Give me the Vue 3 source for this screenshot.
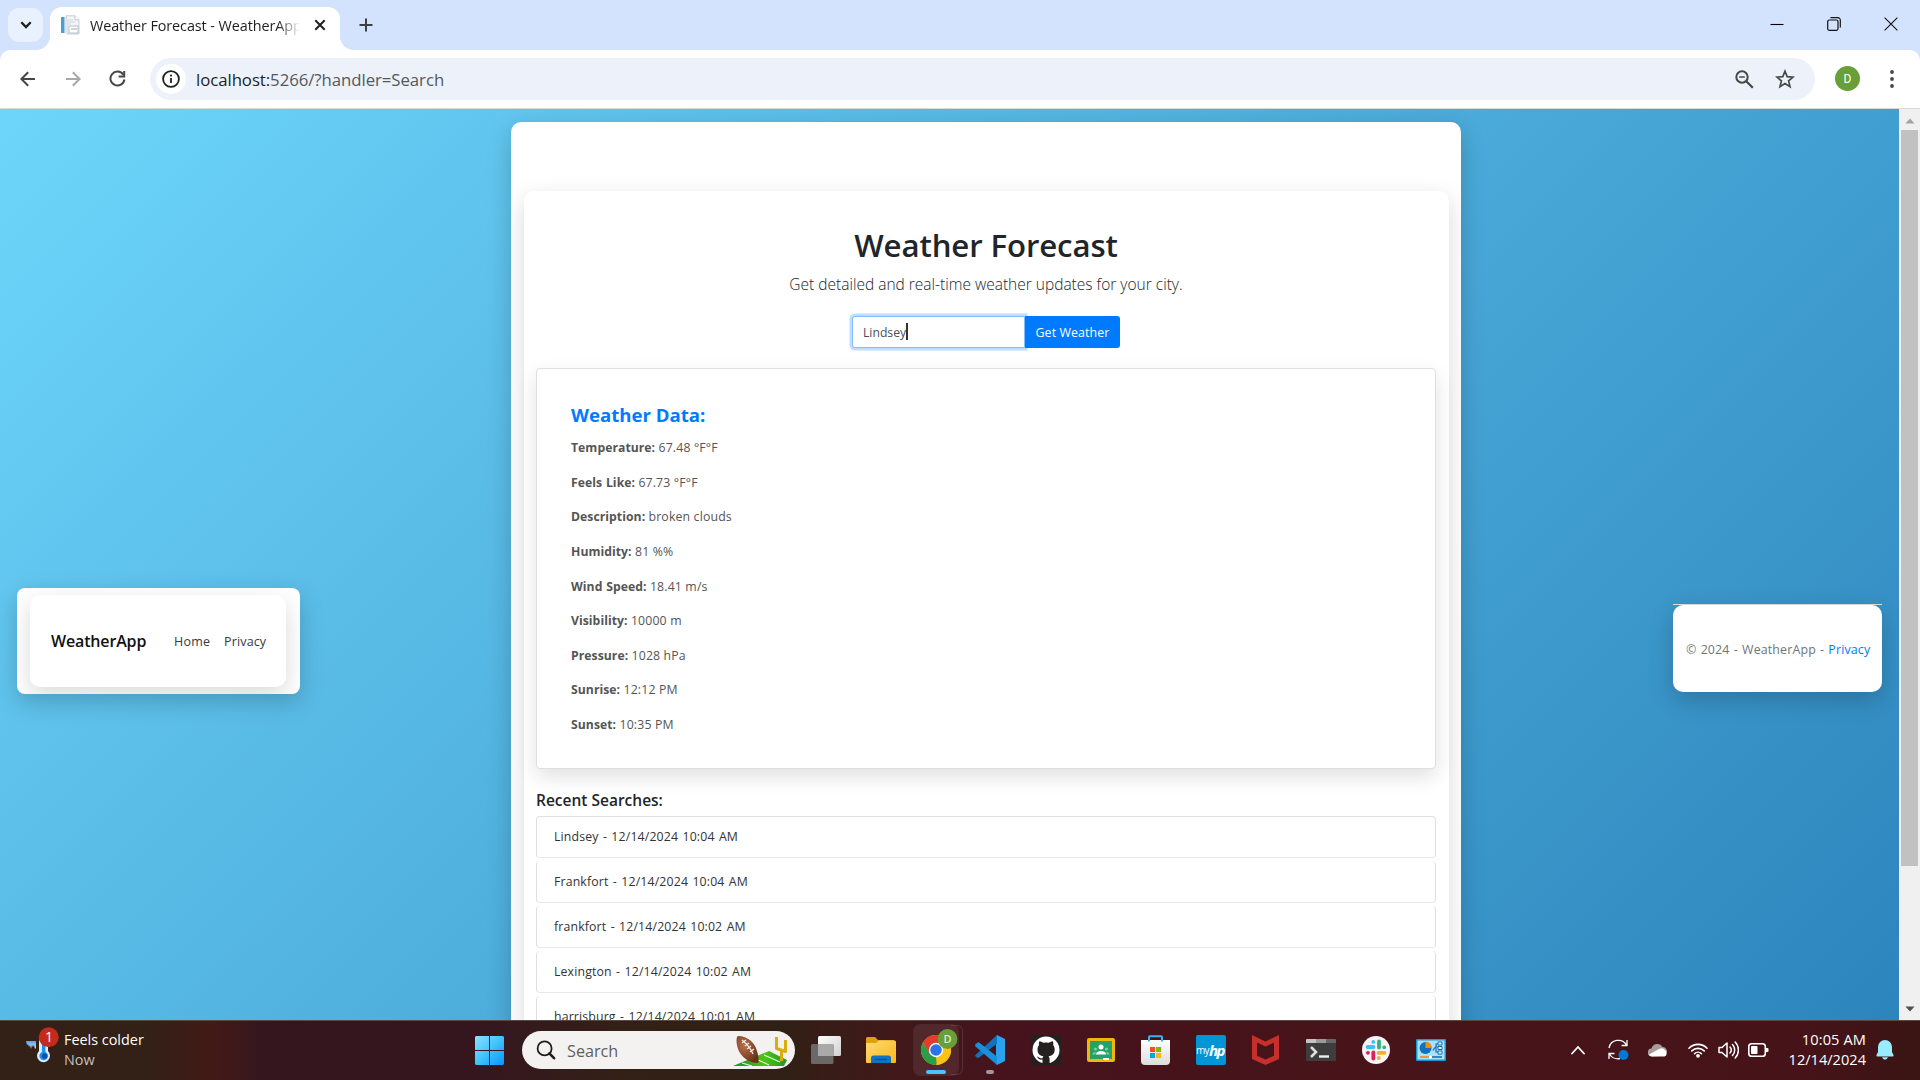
<script setup>
const readings = [
  ['Temperature:', '67.48 °F°F'],
  ['Feels Like:', '67.73 °F°F'],
  ['Description:', 'broken clouds'],
  ['Humidity:', '81 %%'],
  ['Wind Speed:', '18.41 m/s'],
  ['Visibility:', '10000 m'],
  ['Pressure:', '1028 hPa'],
  ['Sunrise:', '12:12 PM'],
  ['Sunset:', '10:35 PM'],
]
const searches = [
  'Lindsey - 12/14/2024 10:04 AM',
  'Frankfort - 12/14/2024 10:04 AM',
  'frankfort - 12/14/2024 10:02 AM',
  'Lexington - 12/14/2024 10:02 AM',
  'harrisburg - 12/14/2024 10:01 AM',
]
</script>

<template>
  <div class="screen">
    <div class="tabstrip">
      <div class="tab-search">
        <svg width="12" height="8" viewBox="0 0 12 8"><path d="M1.3 1.3 6 6l4.7-4.7" fill="none" stroke="#1f1f1f" stroke-width="2.3" /></svg>
      </div>
      <div class="tab">
        <svg class="flare left" width="14" height="14" viewBox="0 0 14 14"><path d="M14 0v14H0A14 14 0 0 0 14 0z" fill="#fff" /></svg>
        <svg class="favicon" width="20" height="20" viewBox="0 0 20 20">
          <path d="M1 2h4v16H1z" fill="#4a9fd0" /><path d="M4 2h1.5v16H4z" fill="#a5cfe8" />
          <path d="M6 .8h9l4 4V19H7V5z" fill="#f3f5f7" stroke="#c9ced4" />
          <path d="M15 .8v4h4" fill="#fff" stroke="#c2c7ce" />
          <path d="M8 5h5M8 7h7M8 9h3" stroke="#d2d6da" />
          <path d="M9 11h9v7H9z" fill="#fff" stroke="#b9bfc6" /><path d="M11 14h6" stroke="#9ea5ad" />
        </svg>
        <span class="tab-title">Weather Forecast - WeatherApp</span>
        <svg class="tab-close" width="12" height="12" viewBox="0 0 12 12"><path d="M1.3 1.3l9.4 9.4M10.7 1.3l-9.4 9.4" stroke="#1f1f1f" stroke-width="2" /></svg>
        <svg class="flare right" width="14" height="14" viewBox="0 0 14 14"><path d="M0 0v14h14A14 14 0 0 1 0 0z" fill="#fff" /></svg>
      </div>
      <svg class="new-tab" width="14" height="14" viewBox="0 0 14 14"><path d="M7 .5v13M.5 7h13" stroke="#3c4043" stroke-width="2" /></svg>
      <div class="window-buttons">
        <svg width="14" height="14" viewBox="0 0 14 14"><path d="M.5 7.5h13" stroke="#000" stroke-width="1.1" /></svg>
        <svg width="14" height="14" viewBox="0 0 14 14"><rect x=".7" y="3" width="10.3" height="10.3" rx="1.5" fill="none" stroke="#111" stroke-width="1.2" /><path d="M3.5.7h7.3a2.5 2.5 0 0 1 2.5 2.5v7.3" fill="none" stroke="#111" stroke-width="1.2" /></svg>
        <svg width="14" height="14" viewBox="0 0 14 14"><path d="M.6.6l12.8 12.8M13.4.6.6 13.4" stroke="#111" stroke-width="1.1" /></svg>
      </div>
    </div>

    <div class="toolbar-wrap">
      <div class="toolbar">
        <svg class="nav-icon" width="16" height="16" viewBox="0 0 16 16"><path d="M15 8H1.8M8.2 1.2 1.4 8l6.8 6.8" fill="none" stroke="#474747" stroke-width="2" /></svg>
        <svg class="nav-icon fwd" width="16" height="16" viewBox="0 0 16 16"><path d="M1 8h13.2M7.8 1.2 14.6 8l-6.8 6.8" fill="none" stroke="#a8a8a8" stroke-width="2" /></svg>
        <svg class="nav-icon reload" width="17" height="17" viewBox="0 0 17 17"><path d="M14.3 4.7A7 7 0 1 0 15.4 9.5" fill="none" stroke="#474747" stroke-width="2" /><path d="M15.2 1v5.6H9.6" fill="none" stroke="#474747" stroke-width="2" /></svg>
        <div class="omnibox">
          <div class="info">
            <svg width="18" height="18" viewBox="0 0 18 18"><circle cx="9" cy="9" r="7.9" fill="none" stroke="#1f1f1f" stroke-width="1.8" /><path d="M9 8v5" stroke="#1f1f1f" stroke-width="1.8" /><circle cx="9" cy="5.6" r="1.05" fill="#1f1f1f" /></svg>
          </div>
          <span class="url"><b>localhost:</b>5266/?handler=Search</span>
          <svg class="zoom-icon" width="19" height="19" viewBox="0 0 19 19"><circle cx="7" cy="7" r="5.7" fill="none" stroke="#474747" stroke-width="2" /><path d="M11 11l6.8 6.8" stroke="#474747" stroke-width="2.2" /><path d="M4.2 7h5.6" stroke="#474747" stroke-width="1.5" /></svg>
          <svg class="star" width="20" height="20" viewBox="0 0 20 20"><path d="M10 2.2l2.2 5.4 5.9.5-4.5 3.8 1.4 5.7-5-3.1-5 3.1 1.4-5.7-4.5-3.8 5.9-.5z" fill="none" stroke="#474747" stroke-width="1.7" /></svg>
        </div>
        <div class="avatar">D</div>
        <svg class="kebab" width="4" height="18" viewBox="0 0 4 18"><circle cx="2" cy="2" r="1.9" fill="#474747" /><circle cx="2" cy="9" r="1.9" fill="#474747" /><circle cx="2" cy="16" r="1.9" fill="#474747" /></svg>
      </div>
    </div>

    <div class="viewport">
      <div class="page">
        <header class="site-header">
          <nav class="navbar">
            <span class="brand">WeatherApp</span>
            <span class="nav-link">Home</span>
            <span class="nav-link privacy">Privacy</span>
          </nav>
        </header>
        <div class="main-card">
          <main class="content">
            <h1>Weather Forecast</h1>
            <p class="lead">Get detailed and real-time weather updates for your city.</p>
            <form class="search-form" @submit.prevent>
              <div class="city">Lindsey<i class="caret"></i></div>
              <button type="button">Get Weather</button>
            </form>
            <section class="weather">
              <h2>Weather Data:</h2>
              <p v-for="r in readings" :key="r[0]"><strong>{{ r[0] }}</strong> {{ r[1] }}</p>
            </section>
            <h3>Recent Searches:</h3>
            <ul class="recent">
              <li v-for="s in searches" :key="s">{{ s }}</li>
            </ul>
          </main>
        </div>
        <footer class="site-footer">
          <div class="footer-box">© 2024 - WeatherApp - <a>Privacy</a></div>
        </footer>
      </div>
      <div class="scrollbar">
        <svg class="sb-arrow" width="10" height="6" viewBox="0 0 10 6"><path d="M5 .5 9.6 5.5H.4z" fill="#a3a3a3" /></svg>
        <div class="thumb"></div>
        <svg class="sb-arrow down" width="10" height="6" viewBox="0 0 10 6"><path d="M5 5.5 9.6.5H.4z" fill="#505050" /></svg>
      </div>
    </div>

    <div class="taskbar">
      <div class="widgets">
        <svg class="w-icon" width="34" height="38" viewBox="0 0 34 38">
          <defs><linearGradient id="ice" x1="0" y1="0" x2="0" y2="1"><stop offset="0" stop-color="#5aa0ea" /><stop offset="1" stop-color="#c6e6ff" /></linearGradient></defs>
          <path d="M0 14h10v7l-1 1-1-4-1 2-1-2-1 4-1-4-1 2-1-3-1 1z" fill="url(#ice)" />
          <path d="M13 10h9v14a6.5 6.5 0 1 1-9 0z" fill="#dcecfb" />
          <path d="M16 12h3.4v13a4.3 4.3 0 1 1-3.4 0z" fill="#1d8fe0" /><circle cx="18.6" cy="29" r="2.7" fill="#0b50b5" />
          <circle cx="22.7" cy="10.3" r="10" fill="#c42b1c" />
          <text x="22.9" y="15" fill="#fff" font-size="14" font-family="Open Sans, sans-serif" text-anchor="middle">1</text>
        </svg>
        <div class="w-text"><span>Feels colder</span><span class="dim">Now</span></div>
      </div>
      <div class="cell">
        <svg width="29" height="29" viewBox="0 0 29 29">
          <defs><linearGradient id="win" x1="0" y1="0" x2="1" y2="1"><stop offset="0" stop-color="#8be3ff" /><stop offset=".5" stop-color="#3fc3fb" /><stop offset="1" stop-color="#0a94ff" /></linearGradient></defs>
          <path d="M1 0h13v14H0V1zM15 0h13l1 1v13H15zM0 15h14v14H1l-1-1zM15 15h14v13l-1 1H15z" fill="url(#win)" />
        </svg>
      </div>
      <div class="search">
        <svg width="20" height="20" viewBox="0 0 20 20"><circle cx="8.6" cy="8.4" r="7" fill="none" stroke="#1f1f1f" stroke-width="1.8" /><path d="M13.4 13.4l4.6 4.8" stroke="#1f1f1f" stroke-width="2.6" stroke-linecap="round" /></svg>
        <span>Search</span>
        <svg class="football" width="56" height="33" viewBox="0 0 56 33">
          <defs>
            <linearGradient id="turf" x1="0" y1="0" x2="1" y2="0"><stop offset="0" stop-color="#1f8f2c" /><stop offset=".6" stop-color="#4fc313" /><stop offset="1" stop-color="#23942a" /></linearGradient>
            <radialGradient id="ball" cx=".35" cy=".35" r=".7"><stop offset="0" stop-color="#b9714b" /><stop offset="1" stop-color="#6a3119" /></radialGradient>
          </defs>
          <path d="M0 31 36 16l18 9-3 6z" fill="url(#turf)" /><path d="M9 28l10 3M21 23l15 7M31 20l16 7" stroke="#e8ffe0" stroke-width="1.1" />
          <path d="M5 1C15 1 22 8 24 16c2 7 2 11 1 12C16 28 8 22 5 14 3 8 3 2 5 1z" fill="url(#ball)" />
          <path d="M9 5c5 4 9 9 11 14M9 8l4-3M12 11l4-3M14 14l4-3M17 17l4-3" fill="none" stroke="#f4e9e2" stroke-width="1.3" />
          <path d="M43.500 2v11.500l9 3V5M48.500 15v11" fill="none" stroke="#d9ad0e" stroke-width="3" stroke-linejoin="round" />
        </svg>
      </div>
      <div class="apps">
        <div class="cell">
          <svg width="30" height="28" viewBox="0 0 30 28"><defs><linearGradient id="tv" x1="0" y1="0" x2="1" y2="1"><stop offset="0" stop-color="#fff" /><stop offset="1" stop-color="#d0d0d0" /></linearGradient></defs><rect x="7" y="0" width="23" height="20" rx="1.5" fill="url(#tv)" /><rect x="0" y="8" width="22.5" height="20" rx="1.5" fill="#6b6868" /><path d="M7 8h15.500v12H7z" fill="#a9a9a9" /></svg>
        </div>
        <div class="cell">
          <svg width="30" height="27" viewBox="0 0 30 27"><defs><linearGradient id="fold" x1="0" y1="0" x2="1" y2="1"><stop offset="0" stop-color="#ffd978" /><stop offset="1" stop-color="#fbb914" /></linearGradient></defs><path d="M0 1.500Q0 0 1.500 0H9l3 3h16v6H0z" fill="#dfa00b" /><path d="M0 6h10l3-2.500h15.500q1.500 0 1.500 1.500v20q0 1-1 1H1q-1 0-1-1z" fill="url(#fold)" /><path d="M5 26v-5q0-2.500 2.500-2.500h15Q25 18.500 25 21v5z" fill="#0f72c4" /><path d="M9 22.500h12" stroke="#0a4f91" stroke-width="1.2" /></svg>
        </div>
        <div class="cell active">
          <div class="behind"></div>
          <svg width="44" height="50" viewBox="0 0 44 50">
            <circle cx="22" cy="25" r="15" fill="#fbc116" />
            <path d="M9 17.500 15.800 28.600 22 32 22.800 40A15 15 0 0 1 9 17.500z" fill="#2b9e48" />
            <path d="M9 17.500A15 15 0 0 1 35.200 18H22l-6.200 10.800z" fill="#e33b2e" />
            <path d="M35.300 18A15 15 0 0 1 22 40l6.200-11L26 19z" fill="#fbc116" />
            <circle cx="22" cy="25" r="7.2" fill="#fff" /><circle cx="22" cy="25" r="5.8" fill="#2a73e8" />
            <circle cx="33.500" cy="14" r="9.9" fill="#689f38" />
            <text x="33.500" y="18" fill="#dcebd0" font-size="11" font-weight="600" font-family="Open Sans, sans-serif" text-anchor="middle">D</text>
            <rect x="12" y="45" width="20" height="4" rx="2" fill="#4cc2ff" />
          </svg>
        </div>
        <div class="cell">
          <svg class="code" width="31" height="39" viewBox="0 0 31 39"><path d="M22 0l8 4v22l-8 4-1-8V8z" fill="#2ba2ee" /><path d="M0 20.500 22 0v8.500L3.500 23 1 22z" fill="#0f74bd" /><path d="M0 9.500 3.500 7 22 21.500V30L.500 11.500z" fill="#1a8fdb" /><rect x="11" y="35" width="8" height="4" rx="2" fill="#a8949a" /></svg>
        </div>
        <div class="cell">
          <svg width="30" height="30" viewBox="0 0 30 30"><path d="M0 0h30v30H0z" fill="#24201f" /><circle cx="15" cy="15" r="13.5" fill="#fff" /><path d="M11.500 29v-4.500c-3 .6-4.500-.8-5.500-3 1.500 0 2.500 2.500 5.500 1.800.1-1 .5-1.600 1-2C9 20.800 6.500 19 6.500 14.500c0-2 .6-3.200 1.500-4.300-.2-1.200-.2-2.600.3-4 1.500 0 2.900.8 4 1.600a12 12 0 0 1 5.600 0c1.100-.8 2.500-1.600 4-1.600.5 1.400.5 2.800.3 4 .9 1.100 1.500 2.300 1.500 4.300 0 4.500-2.700 6.300-6.200 6.800.7.600 1.100 1.600 1.100 3V29z" fill="#24201f" /></svg>
        </div>
        <div class="cell">
          <svg width="28" height="24" viewBox="0 0 28 24"><rect width="28" height="24" rx="2" fill="#f5b50c" /><path d="M3 3h22v18H3z" fill="#23a365" /><circle cx="14" cy="9" r="2.5" fill="#fff" /><circle cx="8.500" cy="11" r="1.6" fill="#7fcba6" /><circle cx="19.500" cy="11" r="1.6" fill="#7fcba6" /><path d="M9 16.500q0-3.500 5-3.500t5 3.500z" fill="#fff" /><path d="M5.500 16.500q0-2.500 3-2.500v2.500zM22.500 16.500q0-2.500-3-2.500v2.500z" fill="#7fcba6" /><path d="M16 20h6v2h-6z" fill="#fff" /></svg>
        </div>
        <div class="cell">
          <svg width="29" height="30" viewBox="0 0 29 30"><defs><linearGradient id="bag" x1="0" y1="0" x2="0" y2="1"><stop offset="0" stop-color="#fff" /><stop offset="1" stop-color="#dcdcdc" /></linearGradient></defs><path d="M0 5h29v21q0 4-4 4H4q-4 0-4-4z" fill="url(#bag)" /><path d="M8 6.500V2q0-.8.8-.8h11.400q.8 0 .8.800v4.500" fill="none" stroke="#2fb7f0" stroke-width="2" /><path d="M9 12h5v5H9z" fill="#f25022" /><path d="M15 12h5v5h-5z" fill="#7fba00" /><path d="M9 18h5v5H9z" fill="#00a4ef" /><path d="M15 18h5v5h-5z" fill="#ffb900" /></svg>
        </div>
        <div class="cell"><div class="hp"><span>my</span><b>hp</b></div></div>
        <div class="cell">
          <svg width="27" height="30" viewBox="0 0 27 30"><path d="M0 0l13.500 6.500L27 0v24l-13.500 6L0 24zM5 7.500v13.200l8.500 3.800 8.500-3.800V7.500l-8.500 4z" fill="#c5302c" fill-rule="evenodd" /></svg>
        </div>
        <div class="cell">
          <svg width="30" height="22" viewBox="0 0 30 22"><rect width="30" height="22" rx="1.2" fill="#3d3d3d" /><path d="M0 4V1q0-1 1-1h9v4z" fill="#c4c4c4" /><path d="M10 0h10v4H10z" fill="#9a9a9a" /><path d="M20 0h9q1 0 1 1v3H20z" fill="#666" /><path d="M5 8l5 5-5 5" fill="none" stroke="#ddd" stroke-width="2.6" /><path d="M13 17.500h10" stroke="#eee" stroke-width="2.4" /></svg>
        </div>
        <div class="cell">
          <svg width="28" height="28" viewBox="0 0 28 28"><circle cx="14" cy="14" r="14" fill="#f6f4f4" /><g fill="none" stroke-width="3.8" stroke-linecap="round"><path d="M5.500 11h6M11.300 5.800v.1" stroke="#36c5f0" /><path d="M17 5.500v6M22.200 11.300h.1" stroke="#2eb67d" /><path d="M22.500 16.800h-6M16.800 22v.1" stroke="#ecb22e" /><path d="M11.300 22.500v-6M6 16.800h-.1" stroke="#e01e5a" /></g></svg>
        </div>
        <div class="cell">
          <svg width="30" height="22" viewBox="0 0 30 22"><rect width="30" height="22" rx="1" fill="#1d94d8" /><path d="M1.500 1.500h27v19h-27z" fill="#a9e2fa" /><circle cx="9.500" cy="9" r="6" fill="#1272bd" /><path d="M9.500 9V2.500A6.300 6.300 0 0 1 15.800 9z" fill="#f28a17" /><path d="M17 11.500q1.500-3.500 3.500-3.500H23M20 8V5h3M20 9v4h3" fill="none" stroke="#176bb0" stroke-width="1.2" /><path d="M22 3h4v3h-4zM22 7.500h4v3h-4zM22 12h4v3h-4z" fill="#e9f8ff" stroke="#176bb0" /><path d="M4 18h10" stroke="#f28a17" stroke-width="1.6" /><path d="M14 18h12" stroke="#1272bd" stroke-width="1.6" /><circle cx="14.500" cy="18" r="1.6" fill="#fff" /></svg>
        </div>
      </div>
      <div class="tray">
        <div class="t40"><svg width="14" height="10" viewBox="0 0 14 10"><path d="M1 8.500 7 2l6 6.500" fill="none" stroke="#fff" stroke-width="1.8" stroke-linecap="round" /></svg></div>
        <div class="t40"><svg width="22" height="22" viewBox="0 0 22 22"><path d="M2 9A9.500 9.500 0 0 1 19.500 6M20 1v5.500h-5.500M13 19.500A9.500 9.500 0 0 1 2.500 15M2 20v-5.500h5.500" fill="none" stroke="#fff" stroke-width="1.3" /><circle cx="16.500" cy="16" r="5" fill="#0078d7" /></svg></div>
        <div class="t40"><svg width="20" height="14" viewBox="0 0 20 14"><path d="M4 13.500a4 4 0 0 1-.5-8A6 6 0 0 1 14.500 4 4.500 4.500 0 0 1 19 9l-8 4z" fill="#a99b9c" /><path d="M1 11.500 11 6q4-2 6 1a3.700 3.700 0 0 1-.5 6.500H4q-2 0-3-2z" fill="#fff" /></svg></div>
        <div class="t30 first"><svg width="20" height="16" viewBox="0 0 20 16"><path d="M1 6.200a12.500 12.500 0 0 1 18 0M3.800 8.900a8.800 8.800 0 0 1 12.400 0M6.600 11.600a5 5 0 0 1 6.800 0" fill="none" stroke="#fff" stroke-width="1.6" stroke-linecap="round" /><circle cx="10" cy="13.800" r="1.9" fill="#fff" /></svg></div>
        <div class="t30"><svg width="21" height="18" viewBox="0 0 21 18"><path d="M1 6.500h3L9 2v14l-5-4.500H1z" fill="none" stroke="#fff" stroke-width="1.5" stroke-linejoin="round" /><path d="M12 6a4.500 4.500 0 0 1 0 6M14.500 3.500a8 8 0 0 1 0 11M17.200 1a11.500 11.500 0 0 1 0 16" fill="none" stroke="#fff" stroke-width="1.5" stroke-linecap="round" /></svg></div>
        <div class="t30"><svg width="21" height="14" viewBox="0 0 21 14"><rect x=".8" y=".8" width="16.5" height="12.4" rx="2.8" fill="none" stroke="#fff" stroke-width="1.6" /><rect x="3" y="3" width="6.5" height="8" rx="1" fill="#fff" /><path d="M18 5h1.500q1 0 1 1v2q0 1-1 1H18z" fill="#fff" /></svg></div>
        <div class="clock"><span class="time">10:05 AM</span><span>12/14/2024</span></div>
        <svg class="bell" width="18" height="20" viewBox="0 0 18 20"><path d="M9 0a7 7 0 0 1 7 7v5l1.500 3q.5 1.500-1 1.500h-15q-1.500 0-1-1.500L2 12V7a7 7 0 0 1 7-7zM6 17.300h6q-1 2.400-3 2.400t-3-2.400z" fill="#99ebff" /></svg>
      </div>
    </div>
  </div>
</template>

<style>
body { overflow: hidden; }
</style>

<style scoped>
* { box-sizing: border-box; }
.screen { width: 1920px; height: 1080px; overflow: hidden; display: flex; flex-direction: column; font-family: "Open Sans", "Noto Sans", sans-serif; }
svg { display: block; flex: none; }
h1, h2, h3, p, ul { margin: 0; padding: 0; }

.tabstrip { height: 50px; flex: none; background: #d3e3fd; display: flex; padding-left: 8px; position: relative; z-index: 1; }
.tab-search { width: 35px; height: 34px; margin-top: 8px; border-radius: 11px; background: #e9f1fe; display: flex; align-items: center; justify-content: center; }
.tab { position: relative; margin: 7px 0 0 7px; width: 290px; height: 43px; background: #fff; border-radius: 12px 12px 0 0; display: flex; padding-left: 10px; }
.flare { position: absolute; bottom: 0; }
.flare.left { left: -14px; }
.flare.right { right: -14px; }
.favicon { margin-top: 8px; }
.tab-title { margin: 7px 0 0 10px; width: 210px; overflow: hidden; white-space: nowrap; font-size: 14.4px; line-height: 24px; color: #1f1f1f; letter-spacing: -.08px; -webkit-mask-image: linear-gradient(90deg, #000 188px, transparent 210px); mask-image: linear-gradient(90deg, #000 188px, transparent 210px); }
.tab-close { margin: 12px 0 0 14px; }
.new-tab { margin: 18px 0 0 18.5px; }
.window-buttons { margin-left: auto; display: flex; gap: 43px; padding: 17px 22px 0 0; }

.toolbar-wrap { height: 59px; flex: none; background: #d3e3fd; }
.toolbar { height: 59px; background: #fff; border-bottom: 1px solid #d9dadc; border-radius: 10px 10px 0 0; display: flex; align-items: center; padding: 0 23px 1px 20px; }
.fwd { margin-left: 29px; }
.reload { margin-left: 28px; }
.omnibox { margin-left: 24px; width: 1665px; height: 42px; border-radius: 21px; background: #ecf1fa; display: flex; align-items: center; padding: 0 20px 0 6px; }
.info { width: 30px; height: 30px; border-radius: 50%; background: #fff; display: flex; align-items: center; justify-content: center; }
.url { margin: 1px 0 0 10px; font-size: 16.8px; letter-spacing: -.06px; color: #55585c; }
.url b { font-weight: 400; color: #1f1f1f; }
.zoom-icon { margin: 1px 21px 0 auto; }
.avatar { margin-left: 20px; width: 25px; height: 25px; border-radius: 50%; background: #689f38; color: #fff; font: 12px/26px Roboto, sans-serif; text-align: center; }
.kebab { margin-left: auto; margin-right: 3px; }

.viewport { height: 911px; flex: none; display: flex; overflow: hidden; }
.page { width: 1899px; height: 1064px; flex: none; background: linear-gradient(135deg, #6dd5fa, #2980b9); display: flex; align-items: center; padding-left: 17px; font-size: 12.2px; color: #212529; }
.site-header { width: 283px; height: 106px; border-radius: 8px; background: #fff; padding: 7px 14px 7px 13px; box-shadow: 0 8px 24px rgba(0,0,0,.2); }
.navbar { height: 92px; border-radius: 10px; background: #fff; box-shadow: 0 8px 24px rgba(0,0,0,.15); clip-path: inset(-7px -14px -7px -13px round 8px); display: flex; align-items: center; padding-left: 21px; font-weight: 600; line-height: 20px; }
.brand { font-size: 16px; width: 98px; letter-spacing: -.15px; color: #111; white-space: nowrap; }
.nav-link { margin: 1px 0 0 25px; font-size: 12.5px; width: 38px; color: #343a40; letter-spacing: .25px; font-weight: 500; }
.nav-link.privacy { margin-left: 12px; width: 44px; letter-spacing: .15px; }

.main-card { margin-left: 211px; width: 950px; height: 1038px; border-radius: 10px; background: #fff; padding: 69px 12px 0 13px; box-shadow: 0 8px 24px rgba(0,0,0,.2); }
.content { height: 955px; border-radius: 10px; background: #fff; box-shadow: 0 8px 24px rgba(0,0,0,.15); clip-path: inset(-69px -12px 0 -13px); padding: 34px 13px 0 12px; }
h1 { font-size: 31.2px; line-height: 40px; font-weight: 600; text-align: center; letter-spacing: -.12px; }
.lead { margin-top: 7px; font-size: 15.5px; line-height: 24px; font-weight: 300; text-align: center; }
.search-form { margin-top: 20px; display: flex; justify-content: center; height: 32px; }
.city { width: 173px; height: 32px; border: 1px solid #80bdff; border-radius: 3px 0 0 3px; box-shadow: 0 0 0 2.5px #bfdeff; padding-left: 10px; line-height: 31px; color: #495057; display: flex; align-items: center; background: #fff; }
.caret { width: 1.5px; height: 17px; background: #333; margin-top: -2px; }
.search-form button { position: relative; width: 95px; height: 32px; border: 0; border-radius: 0 3px 3px 0; background: #007bff; color: #fff; font: 500 12.4px "Open Sans", sans-serif; letter-spacing: .1px; padding: 0; }
.weather { margin-top: 20px; height: 401px; border: 1px solid #dfdfdf; border-radius: 4px; padding: 34px 34px 0; background: #fff; box-shadow: 0 8px 20px rgba(0,0,0,.12); color: #555; }
.weather h2 { font-size: 18.6px; line-height: 24px; color: #007bff; margin-bottom: 4.3px; font-weight: 700; }
.weather p { font-size: 12.3px; line-height: 34.6px; letter-spacing: .15px; }
.weather strong { font-size: 12.2px; font-weight: 700; letter-spacing: .05px; word-spacing: .6px; }
h3 { margin-top: 20px; font-size: 15.5px; line-height: 22px; font-weight: 600; }
.recent { list-style: none; margin-top: 5px; }
.recent li { height: 42px; margin-bottom: 3px; border: 1px solid #dfdfdf; border-bottom-color: #e8e8e8; border-radius: 4px; line-height: 40px; padding: 0 0 0 17px; font-size: 12.3px; letter-spacing: .15px; word-spacing: 1px; color: #333; background: #fff; }
.recent li + li { border-top: 0; padding-top: 1px; }

.site-footer { margin: 14px 0 0 212px; width: 209px; border-top: 1px solid #dee2e6; }
.footer-box { height: 87px; border-radius: 10px; background: #fff; box-shadow: 0 8px 24px rgba(0,0,0,.2); line-height: 90px; padding-left: 13px; color: #6c757d; font-size: 12.4px; letter-spacing: .15px; word-spacing: .8px; white-space: nowrap; }
.footer-box a { color: #007bff; }

.scrollbar { width: 21px; background: #f0f0f0; display: flex; flex-direction: column; align-items: center; padding: 9px 0 8px; }
.thumb { margin-top: 6px; width: 17px; height: 736px; background: #c1c1c1; }
.sb-arrow.down { margin-top: auto; }

.taskbar { height: 60px; flex: none; display: flex; align-items: center; border-top: 1px solid #594843; color: #fff; background: linear-gradient(90deg, #332016 0, #332016 150px, #421a16 215px, #35161f 265px, #35161f 470px, #332017 620px, #302015 780px, #42181a 900px, #46121c 1010px, #471419 1400px, #461319 1800px, #3a1514 1920px); }
.widgets { width: 462px; padding: 0 0 6px 26px; display: flex; align-items: center; }
.w-icon { margin-top: -3px; }
.w-text { margin: 5px 0 0 4px; display: flex; flex-direction: column; font-size: 14.4px; line-height: 20px; }
.dim { color: #c9bfba; }
.cell { width: 55px; height: 60px; flex: none; display: flex; align-items: center; justify-content: center; position: relative; }
.search { margin: 0 0 1px 5px; width: 273px; height: 38px; border-radius: 19px; background: #f4f2f0; display: flex; align-items: center; padding: 0 6px 0 14px; color: #5f5e5d; font-size: 16.2px; }
.search span { margin-left: 11px; padding-top: 1px; }
.football { margin-left: auto; margin-top: 2px; }
.apps { margin: 0 0 1px 3px; display: flex; }
.active svg { position: relative; background: rgba(255,255,255,.08); border-radius: 6px; outline: 1px solid rgba(255,255,255,.07); }
.behind { position: absolute; right: 0; top: 5px; width: 12px; height: 50px; border: 1px solid rgba(255,255,255,.12); border-left: 0; border-radius: 0 6px 6px 0; }
.code { margin-top: 9px; }
.hp { width: 30px; height: 30px; border-radius: 2px; background: #0096d6; display: flex; align-items: center; justify-content: center; font-size: 10px; letter-spacing: -.6px; }
.hp b { font-size: 15px; font-style: italic; letter-spacing: -1.5px; margin-right: 1px; }
.tray { margin-left: auto; display: flex; align-items: center; padding: 0 26px 1px 0; }
.t40, .t30 { width: 40px; display: flex; justify-content: center; }
.t30 { width: 30px; }
.t30.first { margin-left: 5px; }
.clock { width: 93px; display: flex; flex-direction: column; align-items: flex-end; font-size: 14.6px; line-height: 20px; margin-bottom: 3px; }
.time { letter-spacing: .1px; }
.bell { margin-left: 10px; }
</style>
